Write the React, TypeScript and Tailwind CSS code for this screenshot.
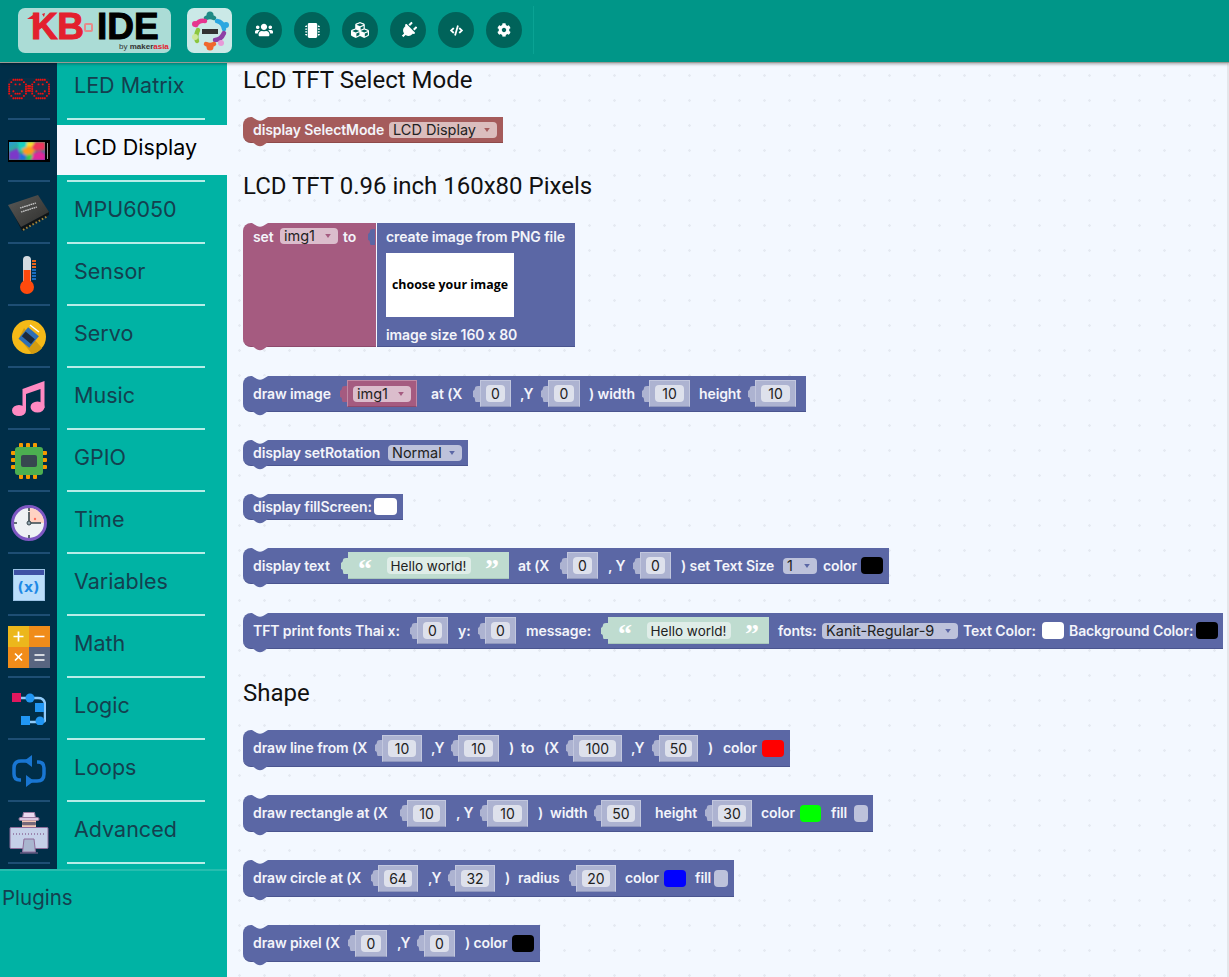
import React from "react";
import { FaUsers, FaMicrochip, FaCubes, FaPlug, FaCode, FaCog } from "react-icons/fa";

const BLUE = "#5B67A5";

function LedIcon() {
  const rows = ["..xxxxx..", ".x.....x.", "x..x.x..x", "x.......x", "x.......x", "x.x...x.x", "x..xxx..x", ".x.....x.", "..xxxxx.."];
  const pts: [number, number][] = [];
  [1.2, 24.2].forEach((ox) => {
    rows.forEach((r, y) => r.split("").forEach((ch, x) => {
      if (ch === "x") pts.push([ox + x * 2.1, 1.8 + y * 2.3]);
    }));
  });
  [8, 10.4, 12.8].forEach((y) => { pts.push([20.2, y], [21.9, y]); });
  return (
    <svg width="42" height="22" viewBox="0 0 42 22">
      <rect width="42" height="22" rx="3" fill="#0b2f47" />
      {pts.map((p, i) => <rect key={i} x={p[0] - 0.95} y={p[1] - 0.95} width="1.9" height="1.9" rx="0.6" fill="#ee1111" />)}
    </svg>
  );
}
function LcdIcon() {
  return (
    <svg width="42" height="22" viewBox="0 0 42 22">
      <defs>
        <linearGradient id="lcdg" x1="0" x2="1" y1="0" y2="1">
          <stop offset="0" stopColor="#2a9ad8" />
          <stop offset="0.5" stopColor="#35b86a" />
          <stop offset="1" stopColor="#6a2ab8" />
        </linearGradient>
        <filter id="lcdb"><feGaussianBlur stdDeviation="0.8" /></filter>
        <clipPath id="lcdc"><rect x="1" y="2" width="36" height="18" /></clipPath>
      </defs>
      <rect width="42" height="22" fill="#000" />
      <g clipPath="url(#lcdc)">
        <rect x="1" y="2" width="36" height="18" fill="url(#lcdg)" />
        <g filter="url(#lcdb)">
          <path d="M1 12l9-4 3 12H1z" fill="#7b39c9" />
          <path d="M10 2h10l-3 8-6 1z" fill="#19d2c2" />
          <path d="M19 2h8l-4 7-5 1z" fill="#ffe02a" />
          <path d="M27 2h10v8l-10 1-4-3z" fill="#f0345c" />
          <path d="M14 9l8-3 5 5-4 5-7-1z" fill="#ff9a1e" />
          <path d="M12 13l6 2-1 5h-6z" fill="#1b6fe0" />
          <path d="M24 14l8-3 5 3v6H22z" fill="#e0269c" />
          <path d="M20 14l5 1-2 5h-5z" fill="#2ed14e" />
        </g>
      </g>
      <rect x="39" y="3" width="1" height="16" fill="#999" />
    </svg>
  );
}
function ChipIcon() {
  return (
    <svg width="42" height="38" viewBox="0 0 42 38">
      <defs>
        <linearGradient id="chipg" x1="0" x2="1" y1="0" y2="1">
          <stop offset="0" stopColor="#5a5a58" />
          <stop offset="1" stopColor="#2e2e2c" />
        </linearGradient>
      </defs>
      <path d="M1 11l11 22 2 4L41 21l0-4z" fill="#0e1418" />
      <path d="M0 11L30 1l11 17-28 15z" fill="url(#chipg)" />
      <path d="M12 14l16-5M13 18l16-5" stroke="#cfcfcf" strokeWidth="1.3" strokeDasharray="1.6 0.6" />
      <path d="M15 36L40 22" stroke="#a8873b" strokeWidth="2" strokeDasharray="1.6 2" />
    </svg>
  );
}
function ThermoIcon() {
  return (
    <svg width="20" height="40" viewBox="0 0 20 40">
      <rect x="4" y="1" width="8" height="28" rx="4" fill="#d5dbe0" />
      <rect x="4.5" y="15" width="7" height="16" fill="#ff4a0d" />
      <circle cx="8" cy="32" r="7" fill="#ff4a0d" />
      {[5, 8, 11].map((y) => <rect key={y} x="13" y={y} width="4" height="2" fill="#e8641d" />)}
      {[14, 17, 20, 23].map((y) => <rect key={y} x="13" y={y} width="4" height="2" fill="#1a6cc0" />)}
    </svg>
  );
}
function ServoIcon() {
  return (
    <svg width="34" height="34" viewBox="0 0 34 34">
      <circle cx="17" cy="17" r="17" fill="#f5b917" />
      <path d="M12 8L30 28A17 17 0 0 1 20 34L7 18z" fill="#d39c10" />
      <path d="M18 5l9 7" stroke="#fff" strokeWidth="1.5" />
      <rect x="10" y="10" width="14" height="15" transform="rotate(40 17 17)" fill="#2f6fb5" />
      <rect x="11" y="15" width="12" height="6" transform="rotate(40 17 17)" fill="#1c2a3c" />
    </svg>
  );
}
function MusicIcon() {
  return (
    <svg width="33" height="36" viewBox="0 0 33 36">
      <path d="M10.5 8L32.5 0v27h-4V8L14 13v16h-3.5z" fill="#ff8ac2" />
      <ellipse cx="7" cy="29.5" rx="7" ry="5.5" fill="#ff8ac2" />
      <ellipse cx="25.5" cy="26" rx="7" ry="5.5" fill="#ff8ac2" />
    </svg>
  );
}
function GpioIcon() {
  return (
    <svg width="36" height="36" viewBox="0 0 36 36">
      {[8, 15, 22].map((v) => (
        <g key={v} fill="#f59a00">
          <rect x={v} y="0" width="4" height="36" rx="1" />
          <rect x="0" y={v} width="36" height="4" rx="1" />
        </g>
      ))}
      <rect x="4" y="4" width="28" height="28" rx="3" fill="#4caf50" />
      <rect x="10" y="12" width="16" height="12" rx="2" fill="#37474f" />
    </svg>
  );
}
function ClockIcon() {
  return (
    <svg width="36" height="36" viewBox="0 0 36 36">
      <circle cx="18" cy="18" r="16.5" fill="#eef1f4" stroke="#7e57c2" strokeWidth="3" />
      <path d="M18 3a15 15 0 0 1 15 15H18z" fill="#ffd2c2" />
      <circle cx="24" cy="14" r="1.2" fill="#ff6e5a" />
      <path d="M18 18V7M18 18h12" stroke="#37474f" strokeWidth="1.6" />
      <path d="M18 3v3M18 30v3M3 18h3" stroke="#37474f" strokeWidth="1.6" />
      <circle cx="18" cy="18" r="2" fill="#90a4ae" stroke="#37474f" />
    </svg>
  );
}
function VarIcon() {
  return (
    <div className="flex h-[32px] w-[32px] flex-col border border-[#9cc3e6] bg-[#bbdefb]">
      <div className="h-[5px] bg-[#3f51a5]" />
      <div className="flex flex-1 items-center justify-center text-[14px] font-bold text-[#1e88e5] [font-family:'DejaVu_Sans',sans-serif]">(x)</div>
    </div>
  );
}
function MathIcon() {
  return (
    <svg width="42" height="42" viewBox="0 0 42 42">
      <rect width="21" height="21" fill="#ecb71c" />
      <rect x="21" width="21" height="21" fill="#f08c1a" />
      <rect y="21" width="21" height="21" fill="#f08c1a" />
      <rect x="21" y="21" width="21" height="21" fill="#596580" />
      <path d="M10.5 5.5v10M5.5 10.5h10M26.5 10.5h10M7 27.5l7 7M14 27.5l-7 7M26.5 29h10M26.5 34h10" stroke="#fff" strokeWidth="1.7" />
    </svg>
  );
}
function LogicIcon() {
  return (
    <svg width="34" height="32" viewBox="0 0 34 32">
      <path d="M8 5h18q7 0 7 7v15q0 2-5 2H14" stroke="#90caf9" strokeWidth="2.5" fill="none" />
      <rect y="0" width="9" height="9" fill="#e0185e" />
      <circle cx="18" cy="5" r="4.5" fill="#2196f3" />
      <rect x="23" y="10" width="9" height="9" fill="#2196f3" />
      <rect x="9" y="23" width="9" height="9" fill="#2196f3" />
      <circle cx="28" cy="28" r="4.5" fill="#2196f3" />
    </svg>
  );
}
function LoopIcon() {
  return (
    <svg width="34" height="32" viewBox="0 0 34 32">
      <path d="M16 6H9Q2 6 2 13v6q0 6 6 6h1M18 26h7q7 0 7-7v-6q0-6-6-6h-1" stroke="#1976d2" strokeWidth="3.5" fill="none" />
      <path d="M20 0v12l-8-6zM14 20v12l8-6z" fill="#1976d2" />
    </svg>
  );
}
function SpyIcon() {
  return (
    <svg width="40" height="42" viewBox="0 0 40 42">
      <path d="M13.5 6l1-5.5h11l1 5.5z" fill="#ead9ee" stroke="#9a7aa0" />
      <rect x="10" y="5.5" width="20" height="3" rx="1.5" fill="#dcc8e0" stroke="#9a7aa0" />
      <path d="M13 8.5h14v7H13z" fill="#f2c7b4" />
      <rect x="13" y="10" width="14" height="3.2" rx="1" fill="#75687a" />
      <rect x="1" y="15.5" width="38" height="21" rx="1" fill="#c5d0e8" stroke="#8d6c9a" />
      <path d="M4 22h32" stroke="#8d6c9a" strokeWidth="1.5" strokeDasharray="1 2" />
      <path d="M15 27h10l1.5 13h-13z" fill="#a9b6cf" stroke="#8d6c9a" />
      <path d="M11 41h18" stroke="#8d6c9a" />
    </svg>
  );
}

const cats: [string, React.ReactNode][] = [
  ["LED Matrix", <LedIcon />],
  ["LCD Display", <LcdIcon />],
  ["MPU6050", <ChipIcon />],
  ["Sensor", <ThermoIcon />],
  ["Servo", <ServoIcon />],
  ["Music", <MusicIcon />],
  ["GPIO", <GpioIcon />],
  ["Time", <ClockIcon />],
  ["Variables", <VarIcon />],
  ["Math", <MathIcon />],
  ["Logic", <LogicIcon />],
  ["Loops", <LoopIcon />],
  ["Advanced", <SpyIcon />],
];

function T({ c, children }: { c: string; children: React.ReactNode }) {
  return <span className={`flex-none whitespace-nowrap text-[14px] font-semibold leading-[18px] tracking-[-0.1px] text-[#f3f4fa] ${c}`}>{children}</span>;
}
function Tab({ fill }: { fill: string }) {
  return (
    <svg width="7" height="16" viewBox="0 0 7 16" className="flex-none">
      <path d="M7 0H5Q2 0 2 2T0 5v6q2 0 2 3t3 2h2z" fill={fill} />
    </svg>
  );
}
function In({ w, v }: { w: string; v: string }) {
  return (
    <div className="flex flex-none items-center">
      <Tab fill="#ADB3D1" />
      <div className={`flex h-[27px] items-center border border-[#c2c7de] border-b-[#8f97bd] bg-[#ADB3D1] px-[5px] ${w}`}>
        <span className="h-[17px] w-full rounded-[4px] bg-[#DEE1EC] text-center text-[14px] leading-[18px] text-[#222]">{v}</span>
      </div>
    </div>
  );
}
function Str() {
  return (
    <div className="flex flex-none items-center">
      <Tab fill="#BFDCD0" />
      <div className="flex h-[27px] w-[161px] items-center justify-between border-b border-b-[#a9c8bc] bg-[#BFDCD0] pl-[10px] pr-[10px]">
        <span className="h-[18px] text-[28px] font-bold leading-[26px] text-white [font-family:'Liberation_Serif',serif]">“</span>
        <span className="h-[17px] w-[84px] rounded-[4px] bg-[#DFEDE8] text-center text-[13.5px] leading-[18px] text-[#222]">Hello world!</span>
        <span className="h-[18px] text-[28px] font-bold leading-[26px] text-white [font-family:'Liberation_Serif',serif]">”</span>
      </div>
    </div>
  );
}
function Dd({ w, v, bg = "bg-[#BDC2DB]", arrow = BLUE }: { w: string; v: string; bg?: string; arrow?: string }) {
  return (
    <span className={`flex h-[16px] flex-none items-center justify-between rounded-[4px] pl-[4px] pr-[7px] text-[14.5px] leading-[16px] text-[#222] ${bg} ${w}`}>
      <span className="whitespace-nowrap">{v}</span>
      <svg width="6" height="4" viewBox="0 0 7 5"><path d="M0 0h7L3.5 5z" fill={arrow} /></svg>
    </span>
  );
}
function Sw({ c, w = "w-[22px]" }: { c: string; w?: string }) {
  return <span className={`h-[17px] flex-none rounded-[4px] ${c} ${w}`} />;
}
function Block({ w, h, fill = BLUE, border = "border-b-[#4a558f]", children, items = "items-center", cls = "" }: { w: string; h: string; fill?: string; border?: string; children: React.ReactNode; items?: string; cls?: string }) {
  return (
    <div className={`relative flex flex-none rounded-l-[8px] border-b pl-[10px] ${w} ${h} ${border} ${items} ${cls}`} style={{ background: fill }}>
      <svg width="16" height="4" viewBox="0 0 16 4" className="absolute left-[9px] top-0">
        <path d="M0 0l5 3q3 1.5 6 0l5-3z" fill="#F3F8FF" />
      </svg>
      <svg width="16" height="5" viewBox="0 0 16 5" className="absolute left-[9px] top-full">
        <path d="M0 0l5 3.5q3 1.5 6 0L16 0z" fill={fill} />
      </svg>
      {children}
    </div>
  );
}
function H({ c, children }: { c: string; children: React.ReactNode }) {
  return <h2 className={`h-[34px] text-[24px] font-normal leading-[34px] text-[#111] [font-family:Roboto,sans-serif] ${c}`}>{children}</h2>;
}

export default function App() {
  return (
    <div className="flex h-screen w-full flex-col overflow-hidden bg-[#F3F8FF] [font-family:Inter,sans-serif]">
      <header className="relative z-10 flex h-[63px] flex-none items-start border-b border-b-[#9a9a94] bg-[#009688] shadow-[0_1px_3px_rgba(0,0,0,0.35)]">
        <div className="relative ml-[18px] mt-[8px] h-[45px] w-[153px] rounded-[7px] bg-[#ABDCD6] [font-family:'Liberation_Sans',sans-serif]">
          <svg width="20" height="12" viewBox="0 0 20 12" className="absolute left-[8px] top-[4px]">
            <path d="M1 7l9-6h3v11H8V7z" fill="#e3202e" />
            <path d="M16 2l3-1-1 4z" fill="#e3202e" />
          </svg>
          <span className="absolute left-[13px] top-[4px] text-[37px] font-bold leading-[30px] tracking-[-0.5px] text-[#e3202e] [-webkit-text-stroke:1px_#e3202e]">KB</span>
          <span className="absolute left-[66px] top-[15px] h-[9px] w-[9px] rounded-[2px] border-2 border-[#e88a8a]" />
          <span className="absolute left-[79px] top-[4px] text-[37px] font-bold leading-[30px] text-black [-webkit-text-stroke:1px_#000]">IDE</span>
          <span className="absolute left-[101px] top-[35px] whitespace-nowrap text-[8px] font-bold leading-[8px] text-[#333]"><span className="font-normal">by</span> maker<span className="text-[#e3202e]">asia</span></span>
        </div>
        <div className="ml-[16px] mt-[8px] flex h-[45px] w-[45px] items-center justify-center rounded-[7px] bg-[#CBE9E7]">
          <svg width="42" height="42" viewBox="0 0 42 42">
            <g fill="none" strokeWidth="4.5" strokeLinecap="round">
              <path d="M17 8q4-2 8 0" stroke="#1f8a85" />
              <path d="M28 11q6 1 7 8" stroke="#2aa7e0" />
              <path d="M35 23q-3 7-9 7" stroke="#8e3fa6" />
              <path d="M25 34q-4 2-8 0" stroke="#f0682d" />
              <path d="M8 31q-2-5 1-11" stroke="#8cc63f" />
              <path d="M7 15q3-5 9-4" stroke="#e6358f" />
            </g>
            <rect x="13" y="19" width="16" height="5" fill="#333" />
            <circle cx="21" cy="5" r="3.5" fill="#1f8a85" />
            <circle cx="37" cy="15" r="3" fill="#2aa7e0" />
            <circle cx="32" cy="33" r="3" fill="#e79ad8" />
            <circle cx="21" cy="37" r="3.5" fill="#f0682d" />
            <circle cx="6" cy="27" r="3" fill="#cfe89a" />
            <circle cx="6" cy="14" r="3" fill="#e6358f" />
          </svg>
        </div>
        <div className="ml-[14px] mt-[12px] flex gap-[12px]">
          {[<FaUsers size={18} />, <FaMicrochip size={15} />, <FaCubes size={18} />, <FaPlug size={17} className="rotate-45" />, <FaCode size={13} />, <FaCog size={14} />].map((ic, i) => (
            <div key={i} className="flex h-[36px] w-[36px] items-center justify-center rounded-full bg-[#00635A] text-white">{ic}</div>
          ))}
        </div>
        <div className="ml-[11px] mt-[6px] h-[48px] w-px bg-[#0aa394]" />
      </header>
      <div className="flex min-h-0 flex-1">
        <aside className="flex w-[227px] flex-none flex-col overflow-hidden bg-[#00B3A4]">
          <div className="-mt-[5px] flex h-[811px] flex-none">
            <div className="w-[57px] flex-none bg-[#002E48]">
              {cats.map(([n, icon]) => (
                <div key={n} className="flex h-[62px] flex-col items-center">
                  <div className="flex w-full flex-1 items-center justify-center pt-[2px]">{icon}</div>
                  <div className="h-[2px] w-[42px] bg-[#1E4E74]" />
                </div>
              ))}
            </div>
            <div className="flex-1">
              {cats.map(([n], i) => (
                <div key={n} className="flex h-[62px] flex-col">
                  <div className={`mt-[5px] flex h-[50px] items-center pb-[6px] pl-[17px] text-[21.5px] leading-[28px] ${i === 1 ? "bg-[#F3F8FF] text-black" : "text-[#14404F]"}`}>{n}</div>
                  <div className="ml-[10px] mt-[5px] h-[2px] w-[138px] bg-[#B8EDE8]" />
                </div>
              ))}
            </div>
          </div>
          <div className="h-[2px] flex-none bg-[#26BDAF]" />
          <div className="pl-[2px] pt-[13px] text-[20.5px] leading-[28px] text-[#14404F]">Plugins</div>
        </aside>
        <main className="flex min-w-0 flex-1 flex-col overflow-hidden border-r-2 border-r-[#e4e6ea] bg-[#F3F8FF] bg-[radial-gradient(circle,#e5eaf2_1px,transparent_1.5px)] bg-[length:25px_25px] pl-[16px]">
          <H c="mt-0">LCD TFT Select Mode</H>
          <div className="mt-[20px]">
            <Block w="w-[260px]" h="h-[26px]" fill="#A55B5B" border="border-b-[#8e4a4a]">
              <T c="w-[136px]">display SelectMode</T>
              <Dd w="w-[108px]" v="LCD Display" bg="bg-[#DBBDBD]" arrow="#A55B5B" />
            </Block>
          </div>
          <H c="mt-[26px]">LCD TFT 0.96 inch 160x80 Pixels</H>
          <div className="mt-[20px] flex">
            <Block w="w-[133px]" h="h-[124px]" fill="#A55B80" border="border-b-[#8d4a6c]" items="items-start" cls="pt-[5px]">
              <T c="w-[27px]">set</T>
              <Dd w="w-[58px]" v="img1" bg="bg-[#DBBDCC]" arrow="#A55B80" />
              <T c="ml-[5px] w-[25px]">to</T>
              <div className="mt-[1px]"><Tab fill={BLUE} /></div>
            </Block>
            <div className="ml-px flex h-[124px] w-[198px] flex-none flex-col border-b border-b-[#4a558f] bg-[#5B67A5] pl-[9px] pt-[5px]">
              <T c="">create image from PNG file</T>
              <div className="mt-[7px] flex h-[64px] w-[128px] flex-none items-center justify-center bg-white text-[12.4px] font-bold text-black [font-family:'Open_Sans',sans-serif]">choose your image</div>
              <T c="mt-[9px]">image size 160 x 80</T>
            </div>
          </div>
          <div className="mt-[29px]">
            <Block w="w-[563px]" h="h-[36px]">
              <T c="w-[87px]">draw image</T>
              <Tab fill="#A55B80" />
              <div className="flex h-[27px] w-[70px] flex-none items-center border border-[#c08aa5] border-b-[#8d4a6c] bg-[#A55B80] px-[5px]">
                <Dd w="w-full" v="img1" bg="bg-[#DBBDCC]" arrow="#A55B80" />
              </div>
              <T c="ml-[14px] w-[42px]">at (X</T>
              <In w="w-[31px]" v="0" />
              <T c="ml-[9px] w-[21px]">,Y</T>
              <In w="w-[32px]" v="0" />
              <T c="ml-[9px] w-[53px]">) width</T>
              <In w="w-[41px]" v="10" />
              <T c="ml-[9px] w-[49px]">height</T>
              <In w="w-[41px]" v="10" />
            </Block>
          </div>
          <div className="mt-[28px]">
            <Block w="w-[225px]" h="h-[26px]">
              <T c="w-[135px]">display setRotation</T>
              <Dd w="w-[74px]" v="Normal" />
            </Block>
          </div>
          <div className="mt-[28px]">
            <Block w="w-[160px]" h="h-[26px]">
              <T c="w-[121px]">display fillScreen:</T>
              <Sw c="bg-white" w="w-[23px]" />
            </Block>
          </div>
          <div className="mt-[28px]">
            <Block w="w-[646px]" h="h-[36px]">
              <T c="w-[88px]">display text</T>
              <Str />
              <T c="ml-[9px] w-[42px]">at (X</T>
              <In w="w-[31px]" v="0" />
              <T c="ml-[10px] w-[25px]">, Y</T>
              <In w="w-[31px]" v="0" />
              <T c="ml-[10px] w-[102px]">) set Text Size</T>
              <Dd w="w-[34px]" v="1" />
              <T c="ml-[6px] w-[38px]">color</T>
              <Sw c="bg-black" />
            </Block>
          </div>
          <div className="mt-[29px]">
            <Block w="w-[980px]" h="h-[36px]">
              <T c="w-[157px]">TFT print fonts Thai x:</T>
              <In w="w-[31px]" v="0" />
              <T c="ml-[10px] w-[20px]">y:</T>
              <In w="w-[31px]" v="0" />
              <T c="ml-[10px] w-[75px]">message:</T>
              <Str />
              <T c="ml-[9px] w-[44px]">fonts:</T>
              <Dd w="w-[136px]" v="Kanit-Regular-9" />
              <T c="ml-[5px] w-[79px]">Text Color:</T>
              <Sw c="bg-white" />
              <T c="ml-[5px] w-[127px]">Background Color:</T>
              <Sw c="bg-black" />
            </Block>
          </div>
          <H c="mt-[27px]">Shape</H>
          <div className="mt-[20px]">
            <Block w="w-[547px]" h="h-[37px]">
              <T c="w-[122px]">draw line from (X</T>
              <In w="w-[40px]" v="10" />
              <T c="ml-[9px] w-[20px]">,Y</T>
              <In w="w-[41px]" v="10" />
              <T c="ml-[10px] w-[12px]">)</T>
              <T c="w-[23px]">to</T>
              <T c="w-[22px]">(X</T>
              <In w="w-[49px]" v="100" />
              <T c="ml-[9px] w-[21px]">,Y</T>
              <In w="w-[39px]" v="50" />
              <T c="ml-[10px] w-[15px]">)</T>
              <T c="w-[39px]">color</T>
              <Sw c="bg-[#ff0000]" />
            </Block>
          </div>
          <div className="mt-[28px]">
            <Block w="w-[630px]" h="h-[37px]">
              <T c="w-[147px]">draw rectangle at (X</T>
              <In w="w-[39px]" v="10" />
              <T c="ml-[10px] w-[24px]">, Y</T>
              <In w="w-[41px]" v="10" />
              <T c="ml-[10px] w-[12px]">)</T>
              <T c="w-[44px]">width</T>
              <In w="w-[40px]" v="50" />
              <T c="ml-[14px] w-[50px]">height</T>
              <In w="w-[40px]" v="30" />
              <T c="ml-[9px] w-[39px]">color</T>
              <Sw c="bg-[#00ff00]" w="w-[21px]" />
              <T c="ml-[10px] w-[23px]">fill</T>
              <Sw c="bg-[#BDC2DB]" w="w-[14px]" />
            </Block>
          </div>
          <div className="mt-[28px]">
            <Block w="w-[491px]" h="h-[37px]">
              <T c="w-[118px]">draw circle at (X</T>
              <In w="w-[40px]" v="64" />
              <T c="ml-[10px] w-[20px]">,Y</T>
              <In w="w-[40px]" v="32" />
              <T c="ml-[10px] w-[13px]">)</T>
              <T c="w-[51px]">radius</T>
              <In w="w-[40px]" v="20" />
              <T c="ml-[9px] w-[39px]">color</T>
              <Sw c="bg-[#0000ff]" />
              <T c="ml-[9px] w-[19px]">fill</T>
              <Sw c="bg-[#BDC2DB]" w="w-[14px]" />
            </Block>
          </div>
          <div className="mt-[28px]">
            <Block w="w-[297px]" h="h-[37px]">
              <T c="w-[95px]">draw pixel (X</T>
              <In w="w-[32px]" v="0" />
              <T c="ml-[10px] w-[20px]">,Y</T>
              <In w="w-[31px]" v="0" />
              <T c="ml-[10px] w-[47px]">) color</T>
              <Sw c="bg-black" />
            </Block>
          </div>
        </main>
      </div>
    </div>
  );
}
